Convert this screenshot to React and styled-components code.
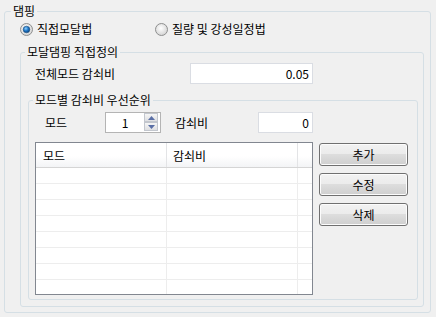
import React from 'react';
import styled, { createGlobalStyle } from 'styled-components';

const GlobalStyle = createGlobalStyle`
  html, body { margin: 0; padding: 0; background: #f0f0f0; }
  body {
    font-family: "Noto Sans CJK KR", "Noto Sans", sans-serif;
    font-size: 12px;
    color: #000;
  }
`;

const Page = styled.div`
  width: 436px;
  height: 317px;
  box-sizing: border-box;
  padding: 4px 0 0 4px;
  background: #f0f0f0;
  overflow: hidden;
`;

const Group = styled.fieldset`
  box-sizing: border-box;
  width: ${(p) => p.$w}px;
  height: ${(p) => p.$h}px;
  margin: ${(p) => p.$m || '0'};
  padding: 0;
  min-width: 0;
  border: 1px solid #d5dfe5;
  border-radius: 3px;
`;

const Legend = styled.legend`
  margin-left: ${(p) => p.$ml}px;
  padding: 0 2px;
  height: 14px;
  line-height: 14px;
  white-space: nowrap;
`;

const Body = styled.div`
  padding: ${(p) => p.$pad};
  display: flex;
  flex-direction: column;
`;

const RadioRow = styled.div`
  display: flex;
  align-items: center;
  height: 16px;
  margin-bottom: 8px;
`;

const RadioItem = styled.label`
  display: flex;
  align-items: center;
  gap: 4px;
  width: ${(p) => (p.$w ? `${p.$w}px` : 'auto')};
  white-space: nowrap;
  line-height: 14px;
`;

const FieldRow = styled.div`
  display: flex;
  align-items: center;
  height: 21px;
  padding-left: ${(p) => p.$pl || 0}px;
  margin-bottom: 9px;
`;

const Label = styled.span`
  width: ${(p) => p.$w}px;
  line-height: 14px;
  white-space: nowrap;
`;

const TextBox = styled.div`
  box-sizing: border-box;
  width: ${(p) => p.$w}px;
  height: 21px;
  border: 1px solid #dadde3;
  background: #fff;
  text-align: right;
  padding-right: 3px;
  line-height: 19px;
`;

const Spin = styled.div`
  box-sizing: border-box;
  display: flex;
  width: 56px;
  height: 21px;
  border: 1px solid #b4b4b4;
  background: #fff;
  margin-right: 14px;
`;

const SpinText = styled.div`
  flex: 1;
  text-align: center;
  line-height: 19px;
`;

const SpinButtons = styled.div`
  display: flex;
  flex-direction: column;
  width: 14px;
  padding: 0 2px 1px 0;
`;

const SpinBtn = styled.div`
  box-sizing: border-box;
  height: 9px;
  border: 1px solid #c3c7ce;
  background: linear-gradient(#f6f6f6, #dedfe2);
  display: flex;
  align-items: center;
  justify-content: center;
`;

const ListArea = styled.div`
  display: flex;
  gap: 6px;
`;

const ListView = styled.div`
  box-sizing: border-box;
  width: 278px;
  height: 153px;
  border: 1px solid #828790;
  background: #fff;
  overflow: hidden;
`;

const Cols = styled.div`
  display: grid;
  grid-template-columns: 131px 131px 1fr;
  box-sizing: border-box;
  height: ${(p) => p.$h}px;
  border-bottom: 1px solid ${(p) => p.$line};
  background: ${(p) => p.$bg || '#fff'};
`;

const Cell = styled.div`
  box-sizing: border-box;
  border-right: 1px solid ${(p) => (p.$last ? 'transparent' : p.$line)};
  padding-left: ${(p) => p.$pl || 0}px;
  display: flex;
  align-items: center;
  white-space: nowrap;
`;

const ButtonCol = styled.div`
  display: flex;
  flex-direction: column;
  gap: 7px;
  padding-top: 1px;
`;

const Button = styled.div`
  box-sizing: border-box;
  width: 89px;
  height: 23px;
  border: 1px solid #707070;
  border-radius: 3px;
  background: linear-gradient(#f2f2f2 0%, #ebebeb 50%, #dddddd 50%, #cfcfcf 100%);
  box-shadow: inset 0 0 0 1px #fcfcfc;
  display: flex;
  align-items: center;
  justify-content: center;
  line-height: 14px;
`;

const RadioIcon = ({ checked }) => (
  <svg width="13" height="13" viewBox="0 0 13 13">
    <defs>
      <radialGradient id="rbg" cx="0.45" cy="0.4" r="0.6">
        <stop offset="0" stopColor="#ffffff" />
        <stop offset="1" stopColor="#d4d4d4" />
      </radialGradient>
      <radialGradient id="rdot" cx="0.4" cy="0.35" r="0.7">
        <stop offset="0" stopColor="#8fd0ff" />
        <stop offset="0.5" stopColor="#1f78c8" />
        <stop offset="1" stopColor="#0b3d78" />
      </radialGradient>
    </defs>
    <circle cx="6.5" cy="6.5" r="6" fill="url(#rbg)" stroke="#8e8f8f" />
    {checked && <circle cx="6.5" cy="6.5" r="3.3" fill="url(#rdot)" stroke="#1c5180" strokeWidth="0.6" />}
  </svg>
);

const Arrow = ({ up }) => (
  <svg width="7" height="4" viewBox="0 0 7 4">
    <path d={up ? 'M0 4 L3.5 0 L7 4 Z' : 'M0 0 L3.5 4 L7 0 Z'} fill="#5a6fa6" />
  </svg>
);

const HEAD_LINE = '#d5d5d5';
const ROW_LINE = '#ededed';
const rows = Array.from({ length: 8 });

export default function App() {
  return (
    <Page>
      <GlobalStyle />
      <Group $w={427} $h={309}>
        <Legend $ml={6}>댐핑</Legend>
        <Body $pad="3px 0 0 15px">
          <RadioRow>
            <RadioItem $w={135}>
              <RadioIcon checked />
              직접모달법
            </RadioItem>
            <RadioItem>
              <RadioIcon />
              질량 및 강성일정법
            </RadioItem>
          </RadioRow>
          <Group $w={404} $h={262}>
            <Legend $ml={4}>모달댐핑 직접정의</Legend>
            <Body $pad="4px 0 0 0">
              <FieldRow $pl={14}>
                <Label $w={155}>전체모드 감쇠비</Label>
                <TextBox $w={123}>0.05</TextBox>
              </FieldRow>
              <Group $w={390} $h={207} $m="0 0 0 7px">
                <Legend $ml={4}>모드별 감쇠비 우선순위</Legend>
                <Body $pad="5px 0 0 6px">
                  <FieldRow $pl={10}>
                    <Label $w={60}>모드</Label>
                    <Spin>
                      <SpinText>1</SpinText>
                      <SpinButtons>
                        <SpinBtn><Arrow up /></SpinBtn>
                        <SpinBtn><Arrow /></SpinBtn>
                      </SpinButtons>
                    </Spin>
                    <Label $w={83}>감쇠비</Label>
                    <TextBox $w={55}>0</TextBox>
                  </FieldRow>
                  <ListArea>
                    <ListView>
                      <Cols $h={25} $line={HEAD_LINE} $bg="linear-gradient(#ffffff 55%, #f3f4f6 100%)">
                        <Cell $line="#e3e4e6" $pl={7}>모드</Cell>
                        <Cell $line="#e3e4e6" $pl={6}>감쇠비</Cell>
                        <Cell $last />
                      </Cols>
                      {rows.map((_, i) => (
                        <Cols key={i} $h={16} $line={ROW_LINE}>
                          <Cell $line={ROW_LINE} />
                          <Cell $line={ROW_LINE} />
                          <Cell $last />
                        </Cols>
                      ))}
                    </ListView>
                    <ButtonCol>
                      <Button>추가</Button>
                      <Button>수정</Button>
                      <Button>삭제</Button>
                    </ButtonCol>
                  </ListArea>
                </Body>
              </Group>
            </Body>
          </Group>
        </Body>
      </Group>
    </Page>
  );
}
